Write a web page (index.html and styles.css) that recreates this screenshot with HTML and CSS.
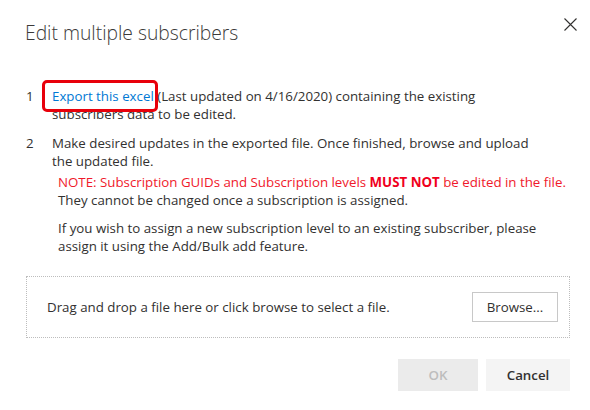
FILE: index.html
```html
<!DOCTYPE html>
<html>
<head>
<meta charset="utf-8">
<link rel="stylesheet" href="styles.css">
</head>
<body>
<div class="dialog">
  <div class="header">
    <h1 class="title">Edit multiple subscribers</h1>
    <button class="close" aria-label="Close">
      <svg width="13" height="13" viewBox="0 0 13 13"><path d="M0.5 0.5L12.5 12.5M12.5 0.5L0.5 12.5" stroke="#323130" stroke-width="1.1" fill="none"/></svg>
    </button>
  </div>
  <ol class="steps">
    <li class="step">
      <span class="num">1</span>
      <div class="body">
        <span class="link-wrap"><a class="link" href="#">Export this excel</a><span class="highlight"></span></span> (Last updated on 4/16/2020) containing the existing subscribers data to be edited.
      </div>
    </li>
    <li class="step">
      <span class="num">2</span>
      <div class="body">
        <p class="line">Make desired updates in the exported file. Once finished, browse and upload the updated file.</p>
        <div class="note">
          <p class="warn">NOTE: Subscription GUIDs and Subscription levels <b>MUST NOT</b> be edited in the file.</p>
          <p class="plain">They cannot be changed once a subscription is assigned.</p>
          <p class="plain gap">If you wish to assign a new subscription level to an existing subscriber, please assign it using the Add/Bulk add feature.</p>
        </div>
      </div>
    </li>
  </ol>
  <div class="drop">
    <span class="drop-text">Drag and drop a file here or click browse to select a file.</span>
    <button class="browse">Browse...</button>
  </div>
  <div class="footer">
    <button class="btn ok" disabled>OK</button>
    <button class="btn cancel">Cancel</button>
  </div>
</div>
</body>
</html>
```

FILE: styles.css
```css
html, body {
  margin: 0;
  padding: 0;
  background: #fff;
}
body {
  font-family: "Open Sans", "Noto Sans", sans-serif;
  font-size: 13.3px;
  color: #323130;
}
.dialog {
  width: 590px;
  height: 410px;
  box-sizing: border-box;
  padding: 0 20px 0 26px;
  display: flex;
  flex-direction: column;
}
.header {
  display: flex;
  justify-content: space-between;
  align-items: flex-start;
  height: 88px;
}
.title {
  margin: 19px 0 0 -1px;
  font-size: 19.3px;
  font-weight: 300;
  color: #3b3a39;
  letter-spacing: 0;
}
.close {
  margin: 18px -7px 0 0;
  padding: 0;
  border: 0;
  background: none;
  width: 13px;
  height: 13px;
  display: flex;
}
.steps {
  list-style: none;
  margin: 0;
  padding: 0;
}
.step {
  display: flex;
  line-height: 17.5px;
  margin-bottom: 12px;
}
.num {
  width: 26px;
  flex: none;
}
.body {
  width: 480px;
}
.link-wrap {
  position: relative;
}
.link {
  color: #0078d4;
  text-decoration: none;
}
.highlight {
  position: absolute;
  left: -10px;
  right: -4px;
  top: -7px;
  bottom: -7px;
  border: 3px solid #e8000b;
  border-radius: 5px;
}
.line {
  margin: 0;
}
.note {
  margin: 4px 0 0 6px;
  width: 500px;
}
.note p {
  margin: 0;
}
.warn {
  color: #f0192b;
  white-space: nowrap;
}
.warn b {
  font-weight: 700;
  color: #f0001c;
}
.gap {
  margin-top: 11px !important;
}
.drop {
  margin-top: 9px;
  height: 62px;
  box-sizing: border-box;
  border: 1px dotted #bdbdbd;
  display: flex;
  align-items: center;
  justify-content: space-between;
  padding: 0 11px 0 20px;
}
.browse {
  font-family: inherit;
  font-size: 13.3px;
  color: #323130;
  background: #fff;
  border: 1px solid #c8c8c8;
  width: 86px;
  height: 30px;
  padding: 0;
}
.footer {
  display: flex;
  justify-content: flex-end;
  gap: 8px;
  margin-top: 21px;
}
.btn {
  font-family: inherit;
  font-size: 13.3px;
  font-weight: 600;
  width: 80px;
  height: 32px;
  border: 0;
  padding: 0;
}
.ok {
  background: #ebebeb;
  color: #bdbdbd;
}
.cancel {
  width: 84px;
  background: #f4f4f4;
  color: #323130;
}
```
